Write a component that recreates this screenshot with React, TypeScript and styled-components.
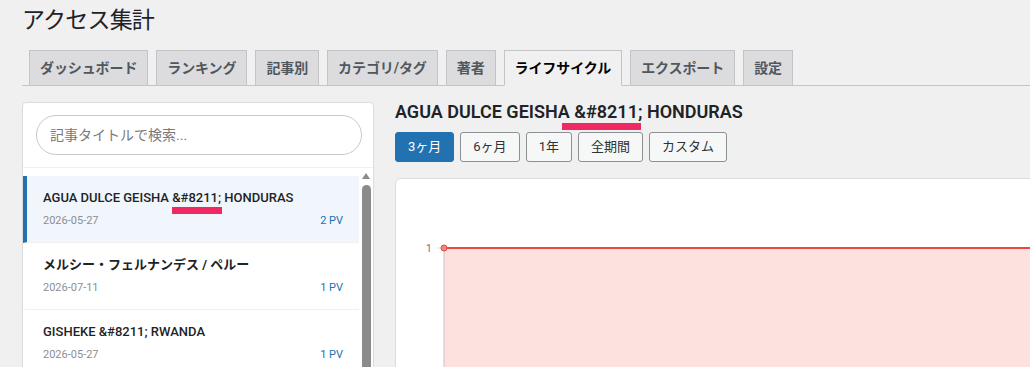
import React from "react";
import styled, { createGlobalStyle } from "styled-components";

const GlobalStyle = createGlobalStyle`
  html, body {
    margin: 0;
    padding: 0;
    overflow: hidden;
    background: #f0f0f1;
  }
  body {
    font-family: Roboto, "Noto Sans CJK JP", sans-serif;
    color: #1d2327;
    font-size: 13px;
  }
  * { box-sizing: border-box; }
`;

const Wrap = styled.div`
  width: 1240px;
  padding-left: 22px;
`;

const PageTitle = styled.h1`
  margin: 0;
  padding-top: 6px;
  font-size: 23px;
  line-height: 30px;
  font-weight: 400;
  letter-spacing: -0.8px;
  color: #1d2327;
`;

const TabBar = styled.nav`
  display: flex;
  gap: 8px;
  margin-top: 14px;
  padding-left: 7px;
  border-bottom: 1px solid #c3c4c7;
`;

const Tab = styled.a<{ $active?: boolean }>`
  display: block;
  margin-bottom: -1px;
  padding: 5px 10px;
  border: 1px solid #c3c4c7;
  border-bottom-color: ${(p) => (p.$active ? "#f0f0f1" : "#c3c4c7")};
  background: ${(p) => (p.$active ? "#f0f0f1" : "#dcdcde")};
  color: ${(p) => (p.$active ? "#000" : "#50575e")};
  font-size: 14px;
  line-height: 24px;
  font-weight: 600;
  letter-spacing: -0.1px;
  text-decoration: none;
  white-space: nowrap;
`;

const Main = styled.div`
  display: grid;
  grid-template-columns: 352px 1fr;
  column-gap: 21px;
  align-items: start;
  margin-top: 16px;
`;

const ListCard = styled.section`
  background: #fff;
  border: 1px solid #dcdcde;
  border-radius: 4px;
  overflow: hidden;
`;

const SearchBox = styled.div`
  padding: 12px 11px 12px 13px;
  border-bottom: 1px solid #f0f0f1;
`;

const SearchInput = styled.input`
  display: block;
  width: 100%;
  height: 40px;
  padding: 0 13px;
  border: 1px solid #c8c8c8;
  border-radius: 20px;
  background: #fff;
  font-family: inherit;
  font-size: 14px;
  color: #1d2327;
  outline: none;
  &::placeholder {
    color: #7a7a7a;
  }
`;

const ListBody = styled.div`
  display: flex;
  height: 520px;
`;

const ArticleList = styled.ul`
  flex: 1;
  min-width: 0;
  list-style: none;
  margin: 0;
  padding: 8px 0 0;
  overflow: hidden;
`;

const ScrollRail = styled.div`
  width: 14px;
  display: flex;
  flex-direction: column;
  align-items: center;
  padding-top: 5px;
  background: #fff;
`;

const ScrollArrow = styled.div`
  width: 0;
  height: 0;
  border-left: 4.5px solid transparent;
  border-right: 4.5px solid transparent;
  border-bottom: 6px solid #8b8b8b;
`;

const ScrollThumb = styled.div`
  width: 9px;
  flex: 1;
  margin-top: 6px;
  margin-left: 1px;
  border-radius: 5px;
  background: #8b8b8b;
`;

const Item = styled.li<{ $active?: boolean }>`
  padding: 12px 16px 13px;
  border-left: 4px solid ${(p) => (p.$active ? "#2271b1" : "transparent")};
  border-bottom: 1px solid #f0f0f1;
  background: ${(p) => (p.$active ? "#f0f6fc" : "#fff")};
`;

const ItemTitle = styled.div<{ $cjk?: boolean }>`
  font-size: 13px;
  line-height: 20px;
  font-weight: ${(p) => (p.$cjk ? 700 : 500)};
  color: #1d2327;
  margin-bottom: 5px;
  white-space: nowrap;
`;

const ItemMeta = styled.div`
  display: flex;
  justify-content: space-between;
  font-size: 11px;
  line-height: 16px;
`;

const ItemDate = styled.span`
  color: #8c8f94;
`;

const ItemViews = styled.span`
  color: #2271b1;
`;

const Mark = styled.span<{ $gap: number; $left: number; $right: number }>`
  position: relative;
  &::after {
    content: "";
    position: absolute;
    left: ${(p) => p.$left}px;
    right: ${(p) => p.$right}px;
    top: calc(100% + ${(p) => p.$gap}px);
    height: 7px;
    background: #ef2a63;
  }
`;

const DetailColumn = styled.section`
  min-width: 0;
`;

const DetailTitle = styled.h2`
  margin: 0;
  font-size: 18px;
  line-height: 20px;
  font-weight: 600;
  color: #1d2327;
  white-space: nowrap;
`;

const RangeBar = styled.div`
  display: flex;
  gap: 6px;
  margin-top: 10px;
`;

const RangeButton = styled.button<{ $active?: boolean }>`
  height: 30px;
  padding: 0 12px;
  border: 1px solid ${(p) => (p.$active ? "#2271b1" : "#8c8f94")};
  border-radius: 3px;
  background: ${(p) => (p.$active ? "#2271b1" : "#f6f7f7")};
  color: ${(p) => (p.$active ? "#fff" : "#2c3338")};
  font-family: inherit;
  font-size: 13px;
  line-height: 28px;
  cursor: pointer;
`;

const ChartCard = styled.div`
  margin-top: 16px;
  padding: 20px;
  background: #fff;
  border: 1px solid #dcdcde;
  border-radius: 6px;
`;

const ChartSvg = styled.svg`
  display: block;
  width: 100%;
  height: 280px;
  overflow: visible;
`;

const ENTITY = "&#8211;";

type MarkPos = { $gap: number; $left: number; $right: number };

function renderTitle(title: string, mark?: MarkPos) {
  const idx = title.indexOf(ENTITY);
  if (idx < 0 || !mark) return title;
  return (
    <>
      {title.slice(0, idx)}
      <Mark {...mark}>{ENTITY}</Mark>
      {title.slice(idx + ENTITY.length)}
    </>
  );
}

const tabs = ["ダッシュボード", "ランキング", "記事別", "カテゴリ/タグ", "著者", "ライフサイクル", "エクスポート", "設定"];

const articles = [
  { title: "AGUA DULCE GEISHA &#8211; HONDURAS", date: "2026-05-27", pv: 2, active: true },
  { title: "メルシー・フェルナンデス / ペルー", date: "2026-07-11", pv: 1 },
  { title: "GISHEKE &#8211; RWANDA", date: "2026-05-27", pv: 1 },
  { title: "EL PARAISO &#8211; COLOMBIA", date: "2026-05-20", pv: 1 },
  { title: "ハンビリ / エチオピア", date: "2026-05-18", pv: 1 },
  { title: "LA ESPERANZA &#8211; GUATEMALA", date: "2026-05-12", pv: 1 },
  { title: "キアンブ / ケニア", date: "2026-05-08", pv: 1 },
];

const ranges = ["3ヶ月", "6ヶ月", "1年", "全期間", "カスタム"];

const hasCjk = (s: string) => /[\u3000-\u30ff\u4e00-\u9fff]/.test(s);

export default function App() {
  return (
    <>
      <GlobalStyle />
      <Wrap>
        <PageTitle>アクセス集計</PageTitle>
        <TabBar>
          {tabs.map((t) => (
            <Tab key={t} href="#" $active={t === "ライフサイクル"}>
              {t}
            </Tab>
          ))}
        </TabBar>
        <Main>
          <ListCard>
            <SearchBox>
              <SearchInput placeholder="記事タイトルで検索..." />
            </SearchBox>
            <ListBody>
              <ArticleList>
                {articles.map((a) => (
                  <Item key={a.title} $active={a.active}>
                    <ItemTitle $cjk={hasCjk(a.title)}>
                      {renderTitle(a.title, a.active ? { $gap: 2, $left: 0, $right: -1 } : undefined)}
                    </ItemTitle>
                    <ItemMeta>
                      <ItemDate>{a.date}</ItemDate>
                      <ItemViews>{a.pv} PV</ItemViews>
                    </ItemMeta>
                  </Item>
                ))}
              </ArticleList>
              <ScrollRail>
                <ScrollArrow />
                <ScrollThumb />
              </ScrollRail>
            </ListBody>
          </ListCard>
          <DetailColumn>
            <DetailTitle>{renderTitle(articles[0].title, { $gap: 1, $left: -12, $right: 1 })}</DetailTitle>
            <RangeBar>
              {ranges.map((r, i) => (
                <RangeButton key={r} $active={i === 0}>
                  {r}
                </RangeButton>
              ))}
            </RangeBar>
            <ChartCard>
              <ChartSvg>
                <rect x="28" y="49" width="100%" height="400" fill="rgba(236, 76, 62, 0.17)" />
                <line x1="28" y1="49" x2="28" y2="400" stroke="#c9c3c3" strokeWidth="1" />
                <line x1="21" y1="49" x2="28" y2="49" stroke="#dddddd" strokeWidth="1" />
                <text x="16" y="52.5" fontSize="11" fill="#7a7a7a" textAnchor="end" fontFamily="Roboto, sans-serif">
                  1
                </text>
                <line x1="28" y1="49" x2="100%" y2="49" stroke="#e8483d" strokeWidth="2.2" />
                <circle cx="28" cy="49" r="3" fill="#f0887f" stroke="#e8483d" strokeWidth="1" />
              </ChartSvg>
            </ChartCard>
          </DetailColumn>
        </Main>
      </Wrap>
    </>
  );
}
